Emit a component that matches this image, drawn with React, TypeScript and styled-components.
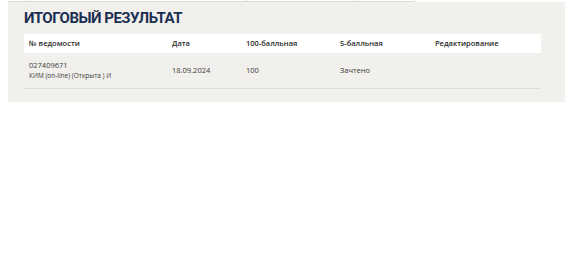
import React from "react";
import styled, { createGlobalStyle } from "styled-components";

const Global = createGlobalStyle`
  html, body { margin: 0; padding: 0; background: #ffffff; }
  body { font-family: "Open Sans", "Noto Sans", sans-serif; }
`;

const Page = styled.div`
  padding-left: 8px;
`;

/* bottom edge of the section above, with its column dividers */
const PrevEdge = styled.div`
  display: grid;
  grid-template-columns: 19px 220px 111px 57px;
  width: 407px;
  height: 1px;
  border-bottom: 1px solid #dcdbd6;
`;

const PrevCell = styled.div<{ $divider?: boolean }>`
  height: 1px;
  border-right: ${(p) => (p.$divider ? "1px solid #dcdbd6" : "none")};
`;

const Panel = styled.section`
  background: #f1f0ec;
  padding: 7px 24px 13px 16px;
`;

const Title = styled.h2`
  margin: 0 0 6px 0;
  font-family: Roboto, "Open Sans", sans-serif;
  font-weight: 700;
  font-size: 15px;
  line-height: 19px;
  letter-spacing: -0.5px;
  color: #1b2f52;
`;

const Table = styled.div`
  width: 517px;
`;

const Row = styled.div<{ $head?: boolean }>`
  display: grid;
  grid-template-columns: 143px 74px 94px 95px 1fr;
  align-items: center;
  background: ${(p) => (p.$head ? "#ffffff" : "transparent")};
  height: ${(p) => (p.$head ? "19px" : "35px")};
  border-bottom: ${(p) => (p.$head ? "none" : "1px solid #dfded9")};
`;

const Cell = styled.div<{ $head?: boolean }>`
  padding-left: 5px;
  font-size: 7.5px;
  font-weight: ${(p) => (p.$head ? 600 : 400)};
  color: ${(p) => (p.$head ? "#2b2b2b" : "#3a3a3a")};
  line-height: 11px;
  white-space: nowrap;
`;

const Sub = styled.div`
  font-size: 6.5px;
  line-height: 10px;
  color: #3a3a3a;
`;

const head = ["№ ведомости", "Дата", "100-балльная", "5-балльная", "Редактирование"];

export default function App() {
  return (
    <>
      <Global />
      <Page>
        <PrevEdge>
          <PrevCell $divider />
          <PrevCell $divider />
          <PrevCell $divider />
          <PrevCell $divider />
        </PrevEdge>
        <Panel>
          <Title>ИТОГОВЫЙ РЕЗУЛЬТАТ</Title>
          <Table>
            <Row $head>
              {head.map((h) => (
                <Cell $head key={h}>
                  {h}
                </Cell>
              ))}
            </Row>
            <Row>
              <Cell>
                027409671
                <Sub>КИМ (on-line) (Открыта ) И</Sub>
              </Cell>
              <Cell>18.09.2024</Cell>
              <Cell>100</Cell>
              <Cell>Зачтено</Cell>
              <Cell />
            </Row>
          </Table>
        </Panel>
      </Page>
    </>
  );
}
